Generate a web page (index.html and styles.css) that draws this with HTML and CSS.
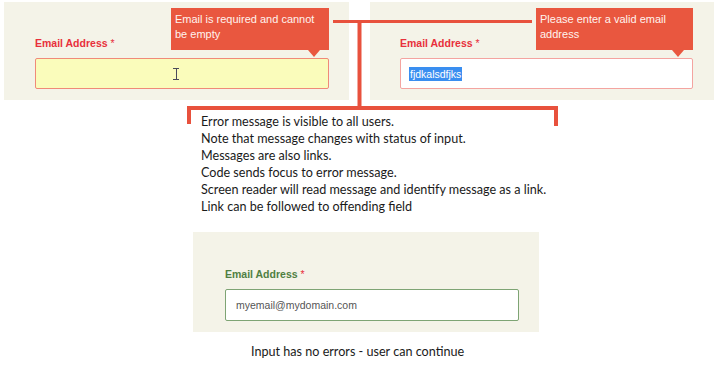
FILE: index.html
```html
<!DOCTYPE html>
<html lang="en">
<head>
    <meta charset="UTF-8">
    <meta name="viewport" content="width=device-width, initial-scale=1.0">
    <title>Email Validation - Error Messages</title>
    <link rel="stylesheet" href="styles.css">
</head>
<body>
    <!-- Two failing states side by side -->
    <div class="states-row">
        <div class="form-panel panel-empty">
            <a href="#emailEmpty" class="error-tip">Email is required and cannot be empty</a>
            <label class="field-label label-error" for="emailEmpty">Email Address <span class="req">*</span></label>
            <div class="field-input input-empty" id="emailEmpty">
                <span class="ibeam"></span>
            </div>
        </div>

        <div class="form-panel panel-invalid">
            <a href="#emailInvalid" class="error-tip">Please enter a valid email address</a>
            <label class="field-label label-error" for="emailInvalid">Email Address <span class="req">*</span></label>
            <div class="field-input input-invalid" id="emailInvalid">
                <span class="selected-text">fjdkalsdfjks</span>
            </div>
        </div>
    </div>

    <!-- Notes under the bracket -->
    <div class="notes">
        <div>Error message is visible to all users.</div>
        <div>Note that message changes with status of input.</div>
        <div>Messages are also links.</div>
        <div>Code sends focus to error message.</div>
        <div>Screen reader will read message and identify message as a link.</div>
        <div>Link can be followed to offending field</div>
    </div>

    <!-- Valid state -->
    <div class="form-panel panel-valid">
        <label class="field-label label-ok" for="emailOk">Email Address <span class="req">*</span></label>
        <div class="field-input input-ok" id="emailOk">myemail@mydomain.com</div>
    </div>
    <div class="caption">Input has no errors - user can continue</div>

    <!-- Connector lines drawn over the panels -->
    <svg class="connectors" width="720" height="366" viewBox="0 0 720 366">
        <g stroke="#e8513d" fill="none" stroke-linecap="butt">
            <line x1="333" y1="21.5" x2="532" y2="21.5" stroke-width="3"/>
            <line x1="359.5" y1="20" x2="359.5" y2="109" stroke-width="4"/>
            <line x1="187" y1="108" x2="558" y2="108" stroke-width="4"/>
            <line x1="189" y1="106" x2="189" y2="124" stroke-width="4"/>
            <line x1="556" y1="106" x2="556" y2="126" stroke-width="4"/>
        </g>
    </svg>
</body>
</html>
```

FILE: styles.css
```css
/* Page */
body {
    margin: 0;
    width: 720px;
    height: 366px;
    background-color: #ffffff;
    position: relative;
    overflow: hidden;
    font-family: "Liberation Sans", Arial, sans-serif;
}

/* Top row with the two error states */
.states-row {
    display: flex;
    gap: 21px;
    padding: 2px 0 0 4px;
}
.form-panel {
    background-color: #f4f3e8;
    position: relative;
    height: 98px;
    box-sizing: border-box;
}
.panel-empty {
    width: 345px;
    padding: 34px 0 0 31px;
}
.panel-invalid {
    width: 344px;
    padding: 34px 0 0 30px;
}

/* Labels and inputs */
.field-label {
    display: block;
    font-size: 10.5px;
    font-weight: bold;
    line-height: 14px;
    height: 22px;
}
.label-error {
    color: #e8303c;
}
.label-ok {
    color: #4f7f42;
}
.req {
    color: #e8303c;
    font-weight: normal;
}
.field-input {
    box-sizing: border-box;
    height: 31px;
    border-radius: 2px;
    font-size: 10.5px;
    display: flex;
    align-items: center;
    padding-left: 8px;
}
.input-empty {
    width: 294px;
    background-color: #fafcbb;
    border: 1px solid #f08a78;
    justify-content: center;
    padding-left: 0;
}
.input-invalid {
    width: 293px;
    background-color: #ffffff;
    border: 1px solid #f4a4a0;
}
.input-ok {
    width: 294px;
    height: 32px;
    background-color: #ffffff;
    border: 1px solid #7ea474;
    color: #555555;
    padding-left: 10px;
}

/* Mouse text cursor */
.ibeam {
    width: 6px;
    height: 12px;
    margin-left: -12px;
    border-top: 1px solid #4a4a5a;
    border-bottom: 1px solid #4a4a5a;
    box-sizing: border-box;
    background: linear-gradient(#4a4a5a, #4a4a5a) center / 1px 100% no-repeat;
}

/* Highlighted value */
.selected-text {
    background-color: #3a8ef0;
    color: #ffffff;
    line-height: 14px;
    padding: 0 1px;
}

/* Error tooltip */
.error-tip {
    position: absolute;
    top: 6px;
    width: 158px;
    height: 42px;
    box-sizing: border-box;
    padding: 4px 4px 0 4px;
    background-color: #e9573f;
    color: #fff3ee;
    font-size: 11px;
    line-height: 15px;
    text-decoration: none;
}
.error-tip::after {
    content: "";
    position: absolute;
    bottom: -7px;
    right: 9px;
    border-left: 6px solid transparent;
    border-right: 6px solid transparent;
    border-top: 7px solid #e9573f;
}
.panel-empty .error-tip {
    left: 167px;
}
.panel-invalid .error-tip {
    left: 166px;
    width: 157px;
}

/* Notes */
.notes {
    margin: 13px 0 0 201px;
    font-family: Lato, "Open Sans", sans-serif;
    font-size: 12.6px;
    line-height: 17px;
    color: #1a1a1a;
}

/* Valid panel */
.panel-valid {
    width: 346px;
    height: 100px;
    margin: 17px 0 0 193px;
    padding: 35px 0 0 32px;
}
.caption {
    margin: 11px 0 0 251px;
    font-family: Lato, "Open Sans", sans-serif;
    font-size: 12.6px;
    line-height: 17px;
    color: #1a1a1a;
}

/* Connector overlay */
.connectors {
    position: absolute;
    left: 0;
    top: 0;
    pointer-events: none;
}
```
